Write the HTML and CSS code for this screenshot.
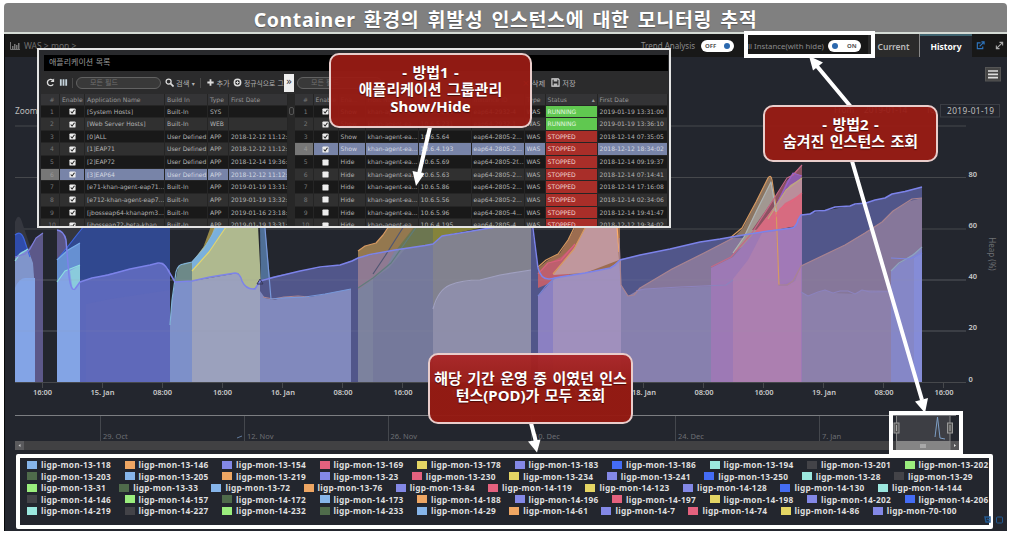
FILE: index.html
```html
<!DOCTYPE html>
<html lang="ko">
<head>
<meta charset="utf-8">
<title>Container monitoring</title>
<link rel="stylesheet" href="styles.css">
</head>
<body>
<main class="slide">
  <h1 class="title"><span>Container 환경의 휘발성 인스턴스에 대한 모니터링 추적</span></h1>
  <div class="app">
    <header class="bar">
      <svg class="bar-icon" viewBox="0 0 10 8"><path d="M.5 0v7.5H10" fill="none" stroke="#777"/><path d="M2 7V4h1.5v3zM4 7V2h1.5v5zM6 7V3h1.5v4zM8 7V1h1.5v6z" fill="#777"/></svg>
      <span class="crumb">WAS &gt; mon &gt;</span>
      <span class="bar-label trend">Trend Analysis</span>
      <span class="toggle off">OFF<i></i></span>
      <span class="bar-label inst">ll Instance(with hide)</span>
      <span class="toggle on"><i></i>ON</span>
      <span class="tab">Current</span>
      <span class="tab active">History</span>
      <svg class="act" viewBox="0 0 10 10"><path d="M5 2H1.5v6.500h6V6M4 6l4.500-4.500M6 1h3v3" fill="none" stroke="#2e74bd" stroke-width="1.300"/></svg>
      <svg class="act2" viewBox="0 0 10 10"><path d="M2 8l6-6M5 1.500h3.500V5M1.500 5v3.500H5" fill="none" stroke="#aaa" stroke-width="1.200"/></svg>
    </header>
    <svg class="chart" viewBox="4 57 1003 396">
      <g class="grid"><path d="M15 126H966M15 177.500H966M15 229H966M15 280H966M15 331H966"/></g>
      <g>
        <path fill="#35373f" d="M15 222Q19 210 23 225L32 252V382H15z"/>
        <path fill="#5c5889" d="M15 257L25 253L32 244L37 237L43 233V382H15z"/>
        <path fill="#2f4cab" d="M15 235Q21 230 24 239L30 257H15z"/>
        <path fill="#8095cb" d="M15 258L21 252L28 249L33 263L35 291V382H15z"/>
        <path fill="#83a4e6" d="M15 288Q19 278 25 278H35V382H15z"/>
        <path class="ln" stroke="#3f66df" d="M15 235Q21 230 24 239L30 257"/>
        <path class="ln" stroke="#8ddde0" d="M15 261L20 254L28 249"/>
        <path class="ln" stroke="#7e7edb" d="M15 257L25 254L30 249L36 238L43 233"/>
        <path fill="#34363e" d="M57 225H80V250H57z"/>
        <path fill="#5a5686" d="M57 230Q65 231 67 246L70 285H57z"/>
        <path fill="#30488f" d="M57 260L69 245L76 236L84 226H170V382H57z"/>
        <path fill="#6690d2" d="M57 260L68 250L80 243V300H57z"/>
        <path fill="#83a4e5" d="M57 282L65 271L80 265V382H57z"/>
        <path fill="#8acbdc" d="M70 271L80 265V282L73 291z"/>
        <path fill="#5c68bb" d="M80 282L108 274L150 265L163 262.500L170 271V382H80z"/>
        <path fill="#5f69ba" d="M86 304L110 299L170 290V382H86z"/>
        <path class="ln" stroke="#3f66df" d="M57 260L69 245L76 236L84 226"/>
        <path class="ln" stroke="#79aee9" d="M57 260L68 250L80 243"/>
        <path class="ln" stroke="#8de0e0" d="M57 282L65 271L80 265"/>
        <path fill="#6d8988" d="M175 283L178 267L184 263L192 262V283z"/>
        <path fill="#7d90c9" d="M170 325L172 300L175 282L192 281V382H170z"/>
        <path fill="#afb98f" d="M192 262L205 245L213 226H258L261 284L252 290L242 285L238 273L192 281z"/>
        <path fill="#7ab0dc" d="M192 262L204 249L212 234L216 226H227L210 251L192 271z"/>
        <path fill="#96894a" d="M203 248L211 226H215L210 239z"/>
        <path class="ln" stroke="#e3d56c" stroke-width="1.500" d="M192 271L209 252L226 227"/>
        <path class="ln" stroke="#82b4da" d="M170 325L172 300L176 272Q178 264 184 264L192 262L204 249L211 237L218 226"/>
        <path fill="#4f6f96" d="M260 226H265L272 301L261 296z"/>
        <path fill="#9ba1bd" d="M192 281L238 273L244 285L254 289L260 281V382H192z"/>
        <path fill="#51568a" d="M260 280L275 276L300 271L340 265L358 258L395 250L433 244L442 236L490 228H532L538 270L548 279L585 273L610 268L620 259L670 249L700 242L740 235.500L795 227L801 215L825 210.500L850 206L885 198L892 194L922 187V382H260z"/>
        <path fill="#8189bd" d="M260 291L265 298L274 300L285 297L310 297L340 291L351 289V382H260z"/>
        <path class="ln" stroke="#aa8490" d="M263 297L273 299L284 297L298 296L309 297"/>
        <path class="ln" stroke="#7898da" d="M265 228L271 299L283 298L305 297L325 294L351 289"/>
        <path fill="#94784f" d="M358 251L365 246L376 243L383 235L389 226H433V244L395 250L358 258z"/>
        <path fill="#6c7650" d="M397 249L415 226H433V244z"/>
        <path fill="#85833b" d="M433 226H490L442 236L433 244z"/>
        <path fill="#7c829e" d="M358 258L395 250L433 244V382H358z"/>
        <path fill="#8f7a92" d="M358 258L395 250L386 268L373 279L358 290z"/>
        <path fill="#75799b" d="M373 279L389 268L405 249L433 244V382H373z"/>
        <path class="ln" stroke="#d79a62" d="M358 251L365 246L376 243L383 235L389 226"/>
        <path class="ln" stroke="#505673" d="M373 274L385 256L404 226"/>
        <path class="ln" stroke="#5f7c7c" d="M358 288L373 278L391 263L417 226"/>
        <path fill="#82828f" d="M433 244L442 236L490 228H531V382H433z"/>
        <path fill="#8e8eaa" d="M433 309L439 295L447 286L460 282L480 280L500 275L531 270V382H433z"/>
        <path class="ln" stroke="#a0a0c0" d="M433 309Q438 290 450 285T480 280L500 275L531 270"/>
        <path fill="#9c6d50" d="M538 268L548 260L560 253L570 237L576 226H620V280H538z"/>
        <path fill="#bd5f6d" d="M538 275L547 264L561 257L575 244L569 275L538 288z"/>
        <path fill="#c0979d" d="M553 275L575 247L586 226H617L619 260L585 273z"/>
        <path fill="#8b80c2" d="M538 296L548 285L553 279V382H538z"/>
        <path fill="#a090bd" d="M553 278L585 273L610 268L621 259V382H553z"/>
        <path class="ln" stroke="#d79960" d="M538 267L546 260L558 254L568 240L575 226M553 274L574 249L586 226"/>
        <path class="ln" stroke="#d9607c" d="M538 274L548 263L561 260L575 244"/>
        <path class="ln" stroke="#ffae68" d="M617 226L619 252"/>
        <path class="ln" stroke="#7886d8" d="M538 296L546 286L555 278"/>
        <path fill="#86779a" d="M621 285L628 296L634 295L640 288L672 269L704 253L733 238L801 238V266L845 245L882 222L893 211L910 201L922 198V382H621z"/>
        <path fill="#8780ae" d="M621 285L628 296L640 289L680 288L733 285V382H621z"/>
        <path fill="#8c80ab" d="M801 292L808 296L825 290L833 293L855 294L862 290L922 291V382H801z"/>
        <path fill="#8c7561" d="M733 238L743 228L755 204L768 178L771 177L776 211L777 231L741 236z"/>
        <path fill="#a19891" d="M733 252L744 237L756 211L771 182L774 194L775 230z"/>
        <path fill="#8c5261" d="M752 230L775 197L786 181L802 165V226L795 227z"/>
        <path fill="#8c5bac" d="M775 207L787 181L793 173L801 176V190L780 213z"/>
        <path fill="#ba8e9b" d="M754 235L776 204L790 185L802 178V224z"/>
        <path fill="#d76b80" d="M754 233L772 210L777 212L785 203L802 194V225z"/>
        <path fill="#9d79b5" d="M711 268L733 257L754 233L795 227L802 215V382H711z"/>
        <path fill="#ac7fb0" d="M733 279L748 260L762 233L776 231L779 286H787L795 281L801 266V382H733z"/>
        <path fill="#a179b7" d="M776 231L795 227L801 216V266L793 281L780 285z"/>
        <path class="ln" stroke="#d79a62" stroke-width="1.500" d="M730 238L742 228L756 202L768 178Q771 174 772 180L776 207L779 285"/>
        <path class="ln" stroke="#aeb4b4" d="M733 253L744 237L758 208L771 182L776 212"/>
        <path class="ln" stroke="#c56886" d="M711 267L731 257L752 233L775 197L787 178L793 175L802 165"/>
        <path class="ln" stroke="#9c63c8" d="M776 206L788 182L793 173L802 176"/>
        <path class="ln" stroke="#bdaa7c" d="M768 219L786 190L802 178"/>
        <path class="ln" stroke="#e3657f" d="M774 220L780 209L792 201L802 193"/>
        <path class="ln" stroke="#aa8490" d="M619 238L621 285L628 296L634 295L640 288L672 269L704 253L733 238M778 285H787L793 281L801 266L845 245L865 233L882 222L893 211L912 199L922 198"/>
        <path class="ln" stroke="#8c83bd" d="M636 291L645 289L680 287L726 285L733 280M801 292L808 296L818 292L825 290L833 293L840 291H848L855 294L862 290L870 292L922 291"/>
        <path fill="#8587c7" d="M891 271L899 264L910 256L922 248V382H891z"/>
        <path fill="#858cd7" d="M914 258L922 252V382H914z"/>
        <path class="ln" stroke="#8ea4bd" d="M891 271L899 263L913 255L922 247"/>
        <path class="ln" stroke="#7c85df" d="M891 258L910 259L922 253"/>
        <path class="ln main" d="M57 230Q64 231 66 240L69 276Q71 292 75 289L80 282L92 278L108 275L130 269L150 265L158 263Q164 262 168 270L175 282L192 281L210 277L235 273Q240 273 242 281Q246 290 255 289L260 281L275 277L300 271L320 267L340 265L352 261L358 258L370 254.500L395 250L425 245.500L433 244L442 236L460 233L490 228L532 221L538 268Q541 280 550 279L560 277L585 273L610 268L615 265L620 260L640 255L670 249L700 242L720 239L740 235.500L765 231.500L793 228Q797 225 798 220L801 215L810 214L815 211L825 210.500L835 207L850 206L855 204L866 203L875 200L885 198L892 194L905 191.500L922 187"/>
        <path d="M257 284L260 279L263 284z" fill="none" stroke="#36395b"/>
      </g>
      <g class="grid over"><path d="M15 280H966M15 331H966"/></g>
      <g class="grid"><path d="M15 382.500H966M42.500 382V388M102.500 382V388M162.500 382V388M222.500 382V388M282.500 382V388M342.500 382V388M402.500 382V388M643.500 382V388M703.500 382V388M763.500 382V388M823.500 382V388M883.500 382V388M943.500 382V388"/></g>
      <g class="axis">
        <text x="42.500" y="395">16:00</text><text x="102.500" y="395">15. Jan</text><text x="162.500" y="395">08:00</text><text x="222.500" y="395">16:00</text><text x="283" y="395">16. Jan</text><text x="343" y="395">08:00</text><text x="403" y="395">16:00</text><text x="463" y="395">17. Jan</text><text x="523" y="395">08:00</text><text x="583" y="395">16:00</text><text x="644" y="395">18. Jan</text><text x="704" y="395">08:00</text><text x="764" y="395">16:00</text><text x="824" y="395">19. Jan</text><text x="884" y="395">08:00</text><text x="944" y="395">16:00</text>
        <g class="yl"><text x="968.500" y="176.500">80</text><text x="968.500" y="228">60</text><text x="968.500" y="279">40</text><text x="968.500" y="330">20</text><text x="968.500" y="381.500">0</text></g>
        <text class="dim" transform="translate(988.500 254) rotate(90)">Heap (%)</text>
      </g>
      <text class="small" x="15" y="114">Zoom</text>
      <g class="small"><text x="834" y="113">From</text><text x="864" y="113">2019-01-14</text><text x="926" y="113">To</text></g>
      <rect x="940.500" y="104.500" width="59" height="12.500" fill="none" stroke="#3b3e45"/>
      <text class="small" x="947" y="114" textLength="47">2019-01-19</text>
      <rect x="985.500" y="67.500" width="15" height="13.500" fill="#454545" stroke="#555"/>
      <path d="M988 71h10M988 74.300h10M988 77.600h10" stroke="#ddd" stroke-width="1.700"/>
      <g class="nav">
        <path d="M15 415.500H956" stroke="#7c7e82"/>
        <path d="M100.500 416V441M244.500 416V441M388.500 416V441M531.500 416V441M675.500 416V441M819.500 416V441" stroke="#44474d"/>
        <path d="M237 438l5-2" stroke="#617b9d"/>
        <text x="103" y="439">29. Oct</text><text x="247" y="439">12. Nov</text><text x="390.500" y="439">26. Nov</text><text x="534" y="439">10. Dec</text><text x="678" y="439">24. Dec</text><text x="822" y="439">7. Jan</text>
        <rect x="15" y="441" width="942" height="9" fill="#414143"/>
        <rect x="15" y="441" width="9" height="9" fill="#5a5a5d"/>
        <path d="M20.500 444v3l-2-1.500z" fill="#ccc"/>
        <rect x="896.500" y="416" width="53.500" height="25" fill="#3d3e44"/>
        <rect x="896.500" y="441" width="53.500" height="9" fill="#858585"/>
        <rect x="950" y="441" width="10" height="9" fill="#555558"/>
        <path d="M954 444v3l2-1.500z" fill="#ddd"/><path d="M921 444v4M923 444v4M925 444v4" stroke="#ccc"/>
        <path d="M896.500 416V450M950 416V450" stroke="#888"/>
        <path d="M935 437L937.500 417L940 438L945 439" fill="none" stroke="#7d9ec5"/>
        <rect x="894" y="423" width="5" height="10" fill="#555" stroke="#999"/><rect x="947.500" y="423" width="5" height="10" fill="#555" stroke="#999"/>
        <path d="M896.500 425v6M950 425v6" stroke="#aaa"/>
      </g>
    </svg>
    <div class="legend" id="legend"></div>
    <svg class="corner" viewBox="0 0 20 10"><path d="M1 2h5v5H2zM3 4l2 1" fill="none" stroke="#235a92" stroke-width="1.500"/><rect x="12.500" y="2" width="6" height="6" rx="1" fill="none" stroke="#235a92"/></svg>
  </div>

  <section class="popup">
    <div class="popup-title">애플리케이션 목록</div>
    <div class="tools">
      <div class="tools-left">
        <svg class="i9" viewBox="0 0 10 10"><path d="M8 7A3.500 3.500 0 1 1 7.500 2.500" fill="none" stroke="#ddd" stroke-width="1.500"/><path d="M9 .5V4.500H5z" fill="#ddd"/></svg>
        <svg class="i9 cols" viewBox="0 0 10 10"><path d="M2 1.500v7M5 1.500v7M8 1.500v7" stroke="#c5d3dc" stroke-width="2"/></svg>
        <b class="sep"></b>
        <span class="pill">모든 필드</span>
        <svg class="i9 mag" viewBox="0 0 10 10"><circle cx="4" cy="4" r="2.800" fill="none" stroke="#ddd" stroke-width="1.400"/><path d="M6 6l3.500 3.500" stroke="#ddd" stroke-width="1.800"/></svg>
        <span class="cmd find">검색 <small>▾</small></span><b class="sep"></b>
        <svg class="i9 add" viewBox="0 0 10 10"><path d="M5 1.500v7M1.500 5h7" stroke="#ddd" stroke-width="2"/></svg><span class="cmd plus">추가</span>
        <svg class="i9" viewBox="0 0 10 10"><circle cx="5" cy="5" r="3.500" fill="none" stroke="#ddd" stroke-width="1.700"/><path d="M5 3v4M3 5h4" stroke="#ddd"/></svg><span class="cmd regex">정규식으로 그룹</span>
        <span class="more">»</span>
      </div>
      <div class="tools-right"><span class="pill">모든 필드</span><span class="gap"></span><span class="cmd"><i class="x">×</i> 삭제</span>
        <svg class="i9 disk" viewBox="0 0 10 10"><path d="M1 1h7l1 1v7H1z" fill="none" stroke="#ddd" stroke-width="1.200"/><path d="M3 1h4v3H3zM3 6h4v3H3z" fill="#bbb"/></svg><span class="cmd">저장</span></div>
    </div>
    <div class="tables"><div class="tbl left" id="groups"></div><div class="scroll"><i></i></div><div class="tbl right" id="members"></div></div>
  </section>

  <div class="frame frame-toggle"></div>
  <div class="frame frame-brush"></div>
  <svg class="arrows" viewBox="0 0 1012 538">
    <path d="M430 127L419 174M851 107L816 65M852 161L922 400M531 423L536 442" stroke="#fff" stroke-width="4" fill="none"/>
    <path d="M412.500 171L424.500 173.500L416 186zM809 56L823 62.500L813 70.500zM915 401.500L928 398L925 413zM528 441.500L540.500 439.500L537 452.500z" fill="#fff"/>
  </svg>
  <div class="note note-a">- 방법1 -<br>애플리케이션 그룹관리<br>Show/Hide</div>
  <div class="note note-b">- 방법2 -<br>숨겨진 인스턴스 조회</div>
  <div class="note note-c">해당 기간 운영 중 이였던 인스<br>턴스(POD)가 모두 조회</div>
</main>
<script src="app.js"></script>
</body>
</html>
```
FILE: styles.css
```css
* { box-sizing: border-box; }
body { margin: 0; background: #fff; font-family: "Noto Sans", "Noto Sans CJK KR", sans-serif; }
.slide { position: relative; width: 1012px; height: 538px; padding: 3px 5px 0 4px; overflow: hidden; }
.title { margin: 0; height: 31px; border-bottom: 2px solid #d5dbd5; background: #808080; border-radius: 4px 4px 0 0; color: #fff; font-size: 19.500px; line-height: 33px; font-weight: 700; text-align: center; white-space: nowrap; text-shadow: 0 1px 1px #555; }
.title span { letter-spacing: 0.6px; word-spacing: 2.600px; }
.app { position: relative; height: 497px; background: #23262e; border-left: 1px solid #08090b; overflow: hidden; }
.bar { display: flex; align-items: center; height: 23px; background: #181818; font-size: 8px; color: #8b8b8b; white-space: nowrap; }
.bar-icon { width: 10px; height: 8px; margin-left: 5px; }
.crumb { margin-left: 4px; width: 96px; color: #6f6f6f; font-size: 8.500px; }
.bar-label.trend { margin-left: auto; width: 60px; font-size: 8px; }
.bar-label.inst { width: 80px; margin-left: 14px; font-size: 7.800px; }
.toggle { display: flex; align-items: center; justify-content: space-around; width: 33px; height: 12px; border-radius: 6px; background: #fff; color: #555; font-size: 6px; font-weight: 700; }
.toggle i { width: 6px; height: 6px; border-radius: 50%; background: #2b68ae; }
.tab { width: 52px; height: 23px; margin-left: 7px; line-height: 25px; text-align: center; background: #2b2b2b; color: #bbb; font-size: 8.500px; font-weight: 600; border-right: 1px solid #888; }
.tab.active { margin-left: 0; background: #23262e; color: #fff; font-weight: 700; border-top: 2px solid #3f6470; border-right: 0; line-height: 21px; }
.act { width: 9px; height: 9px; margin-left: 4px; }
.act2 { width: 9px; height: 9px; margin: 0 3px 0 10px; }
.chart { display: block; width: 1003px; height: 396px; margin-left: -1px; }
.grid path { stroke: #46484c; fill: none; }
.grid.over path { stroke: rgba(150, 152, 165, .16); }
.ln { fill: none; stroke-width: 1.200; stroke-linejoin: round; }
.main { stroke: #7c83ea; stroke-width: 1.500; }
.axis { font-size: 7.500px; font-weight: 600; fill: #c9c9c9; text-anchor: middle; }
.yl { text-anchor: start; }
.dim { fill: #6f7175; font-weight: 400; font-size: 8px; }
.small { font-size: 8.300px; fill: #bdbdbd; }
.nav text { font-size: 7.500px; fill: #6d6f74; }
.legend { margin: 1px 0 0 11px; width: 977px; height: 75px; border: 4px solid #fff; border-radius: 2px; padding: 1px 0 0 7px; overflow: hidden; font-size: 8.300px; font-weight: 700; letter-spacing: .28px; line-height: 11.550px; color: #dedede; }
.row { display: flex; height: 11.550px; white-space: nowrap; }
.item { display: flex; flex: none; align-items: center; gap: 4px; }
.item i { width: 10px; height: 8px; }
.corner { position: absolute; right: 3px; bottom: 6px; width: 20px; height: 10px; }
.popup { position: absolute; left: 37px; top: 48px; width: 634px; height: 180px; border: 2px solid #e5e5e5; background: #292a2d; padding: 5px 1px 0 2px; overflow: hidden; font-family: "DejaVu Sans", "Noto Sans CJK KR", sans-serif; font-size: 6.050px; color: #b2b2b2; }
.popup-title { height: 16px; margin-left: 3px; padding-left: 5px; background: #000; line-height: 15px; font-size: 8px; color: #999; }
.tools { display: flex; height: 23px; background: #2b2b2c; font-size: 7.300px; white-space: nowrap; }
.tools-left { display: flex; align-items: center; width: 253px; padding-left: 5px; overflow: hidden; }
.tools-right { display: flex; align-items: center; flex: 1; padding-left: 3px; }
.i9 { flex: none; width: 9px; height: 9px; }
.cols { margin: 0 4px; }
.sep { width: 1px; height: 10px; background: #4a4a4a; margin-right: 3px; flex: none; }
.pill { flex: none; width: 85px; height: 12px; border: 1px solid #626262; border-radius: 6px; background: #393939; padding-left: 13px; line-height: 10px; color: #6f6f6f; font-size: 7px; }
.mag { margin: 0 2px 0 4px; }
.find { width: 25px; }
.add { margin: 0 1px 0 2px; }
.plus { width: 15px; margin-right: 2px; }
.regex { width: 40px; margin-left: 2px; overflow: hidden; flex: none; font-size: 6.800px; }
.more { flex: none; width: 10px; height: 18px; background: #eee; color: #222; text-align: center; line-height: 16px; font-size: 10px; }
.gap { width: 140px; }
.x { color: #b83a32; font-style: normal; font-size: 9px; }
.disk { margin: 0 2px 0 6px; }
.tables { display: flex; height: 140px; }
.tbl { display: grid; align-content: start; grid-template-rows: 11.600px; grid-auto-rows: 12.640px; line-height: 12px; overflow: hidden; height: 140px; }
.left { width: 247px; grid-template-columns: 19px 25px 80px 43px 21px 59px; }
.right { width: 374px; grid-template-columns: 19px 25px 27px 53px 53px 53px 21px 52px 70px; }
.tbl span { border-right: 1px solid #252525; padding-left: 2px; overflow: hidden; white-space: nowrap; background: #303030; border-bottom: 1px solid #252525; }
.tbl .odd { background: #191919; }
.tbl .head { background: #343436; color: #999; }
.tbl .num, .tbl .chk { text-align: center; padding: 0; }
.tbl .num { color: #777; padding-left: 4px; }
.tbl .sel { background: #7884a8; color: #d2d6e0; }
.tbl .num.sel { background: #777; color: #999; }
.tbl .run { background: #60c850; color: #e4f5e1; }
.tbl .stop { background: #a92e29; color: #eed5d3; }
.chk svg { width: 7px; height: 7px; margin-top: 2.500px; }
.scroll { width: 7px; background: #272727; padding: 13px 1px; }
.scroll i { display: block; width: 5px; height: 8px; border: 1px solid #555; border-radius: 2px; }
.frame { position: absolute; border: 4px solid #fff; }
.frame-toggle { left: 744px; top: 31px; width: 131px; height: 27px; }
.frame-brush { left: 889px; top: 411px; width: 74px; height: 43px; }
.arrows { position: absolute; left: 0; top: 0; width: 1012px; height: 538px; }
.note { position: absolute; display: flow-root; border: 2px solid #e9cdcb; border-radius: 10px; background: rgba(153, 28, 20, .94); color: #fff; font-size: 15px; word-spacing: 1.500px; line-height: 17px; font-weight: 700; text-align: center; white-space: nowrap; text-shadow: 0 1px 1px #4a0b08; }
.note-a { left: 329px; top: 53px; width: 203px; height: 75px; padding-top: 9px; }
.note-b { left: 763px; top: 105px; width: 175px; height: 57px; padding-top: 9px; }
.note-c { left: 428px; top: 353px; width: 205px; height: 71px; padding-top: 15px; background: linear-gradient(rgba(170, 35, 35, .94), rgba(150, 26, 18, .96) 50%); }
```
FILE: app.js
```js
const palette = { b: "#86b5ea", o: "#eea663", p: "#8388e6", r: "#e4617e", y: "#e4d564", u: "#446cf4", t: "#9be8df", k: "#434348", g: "#9aed7d", d: "#4f6b4b" };
const legendRows = [
  ["b13-118", "o13-146", "p13-154", "r13-169", "y13-178", "p13-183", "u13-186", "t13-194", "k13-201", "g13-202"],
  ["d13-203", "b13-205", "o13-219", "p13-23", "r13-230", "y13-234", "p13-241", "u13-250", "t13-28", "k13-29"],
  ["g13-31", "d13-33", "b13-72", "o13-76", "p13-84", "r14-119", "y14-123", "p14-128", "u14-130", "t14-144"],
  ["k14-146", "g14-157", "d14-172", "b14-173", "o14-188", "p14-196", "r14-197", "y14-198", "p14-202", "u14-206"],
  ["t14-219", "k14-227", "g14-232", "d14-233", "b14-29", "o14-61", "p14-7", "r14-74", "y14-86", "p70-100"]
];
const itemWidth = { 6: 97.5, 5: 92.2, 4: 87 };
document.getElementById("legend").innerHTML = legendRows.map(row => '<div class="row">' + row.map(entry => {
  const name = entry.slice(1);
  return `<span class="item" style="width:${itemWidth[name.length]}px"><i style="background:${palette[entry[0]]}"></i>ligp-mon-${name}</span>`;
}).join("") + "</div>").join("");

const box = on => `<svg viewBox="0 0 8 8"><rect x=".5" y=".5" width="7" height="7" rx="1" fill="#eee"/>${on ? '<path d="M2 4l1.500 1.700L6.300 2" fill="none" stroke="#222" stroke-width="1.200"/>' : ""}</svg>`;
function fill(id, head, rows, selected) {
  let html = head.map((h, i) => `<span class="head${i === 0 ? " num" : ""}">${h}</span>`).join("");
  rows.forEach((cells, r) => {
    html += [r + 1, ...cells].map((cell, i) => {
      let cls = r === selected ? "sel" : r % 2 ? "" : "odd";
      if (i === 0) cls += " num";
      if (i === 1) { cls += " chk"; cell = box(cell); }
      if (cell === "RUNNING") cls += " run";
      if (cell === "STOPPED") cls += " stop";
      return `<span class="${cls}">${cell}</span>`;
    }).join("");
  });
  document.getElementById(id).innerHTML = html;
}
fill("groups", ["#", "Enable", "Application Name", "Build In", "Type", "First Date"], [
  [1, "[System Hosts]", "Built-In", "SYS", ""],
  [1, "[Web Server Hosts]", "Built-In", "WEB", ""],
  [1, "[0]ALL", "User Defined", "APP", "2018-12-12 11:12:"],
  [1, "[1]EAP71", "User Defined", "APP", "2018-12-12 11:12:"],
  [1, "[2]EAP72", "User Defined", "APP", "2018-12-14 19:36:"],
  [1, "[3]EAP64", "User Defined", "APP", "2018-12-12 11:12:"],
  [1, "[e71-khan-agent-eap71...", "Built-In", "APP", "2019-01-19 13:31:"],
  [1, "[e712-khan-agent-eap7...", "Built-In", "APP", "2019-01-19 13:32:"],
  [1, "[jbosseap64-khanapm3...", "Built-In", "APP", "2019-01-16 23:18:"],
  [1, "[jbosseap72-beta-khan...", "Built-In", "APP", "2019-01-19 13:31:"]
], 5);
const agent = "khan-agent-ea...";
fill("members", ["#", "Enable", "Ena...", "Host Name", "IP", "Instance ID", "Type", "Status &nbsp; &nbsp; &nbsp; &nbsp; &nbsp; &nbsp; ▴", "First Date"], [
  [1, "Show", agent, "10.6.5.231", "eap64-2932-4", "WAS", "RUNNING", "2019-01-19 13:31:00"],
  [1, "Show", agent, "10.6.5.231", "eap64-2932-1", "WAS", "RUNNING", "2019-01-19 13:36:10"],
  [1, "Show", agent, "10.6.5.64", "eap64-2805-2...", "WAS", "STOPPED", "2018-12-14 07:35:05"],
  [1, "Show", agent, "10.6.4.193", "eap64-2805-2...", "WAS", "STOPPED", "2018-12-12 18:34:02"],
  [0, "Hide", agent, "10.6.5.69", "eap64-2805-2f...", "WAS", "STOPPED", "2018-12-14 09:19:37"],
  [0, "Hide", agent, "10.6.5.63", "eap64-2805-2...", "WAS", "STOPPED", "2018-12-14 07:14:41"],
  [0, "Hide", agent, "10.6.5.86", "eap64-2805-2...", "WAS", "STOPPED", "2018-12-14 17:16:08"],
  [0, "Hide", agent, "10.6.5.56", "eap64-2805-2...", "WAS", "STOPPED", "2018-12-14 02:34:06"],
  [0, "Hide", agent, "10.6.5.96", "eap64-2805-4...", "WAS", "STOPPED", "2018-12-14 19:41:47"],
  [0, "Hide", agent, "10.6.4.195", "eap64-2805-4...", "WAS", "STOPPED", "2018-12-12 19:34:02"]
], 3);
```
